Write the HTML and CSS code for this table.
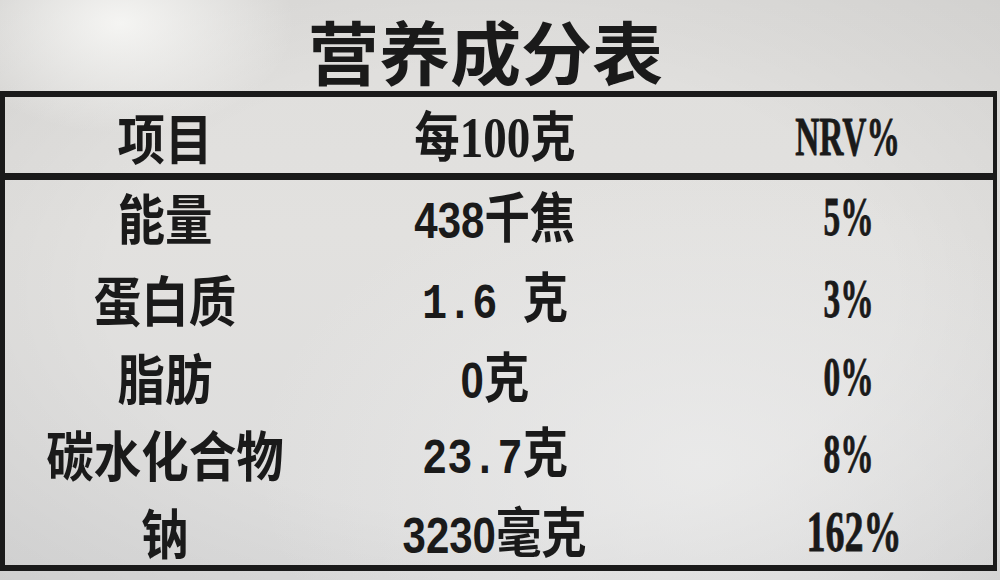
FILE: index.html
```html
<!DOCTYPE html>
<html lang="zh-CN">
<head>
<meta charset="utf-8">
<title>营养成分表</title>
<link rel="stylesheet" href="styles.css">
</head>
<body>
<div class="page">
  <div class="title"><span class="title-text">营养成分表</span></div>
  <div class="table">
    <div class="row head">
      <div class="cell c1"><span class="t">项目</span></div>
      <div class="cell c2"><span class="t">每<span class="serif">100</span>克</span></div>
      <div class="cell c3"><span class="t">NRV%</span></div>
    </div>
    <div class="row">
      <div class="cell c1"><span class="t">能量</span></div>
      <div class="cell c2"><span class="t"><span class="sans">438</span>千焦</span></div>
      <div class="cell c3"><span class="t">5%</span></div>
    </div>
    <div class="row">
      <div class="cell c1"><span class="t">蛋白质</span></div>
      <div class="cell c2"><span class="t"><span class="mono">1.6 </span>克</span></div>
      <div class="cell c3"><span class="t">3%</span></div>
    </div>
    <div class="row">
      <div class="cell c1"><span class="t">脂肪</span></div>
      <div class="cell c2"><span class="t"><span class="sans">0</span>克</span></div>
      <div class="cell c3"><span class="t">0%</span></div>
    </div>
    <div class="row">
      <div class="cell c1"><span class="t">碳水化合物</span></div>
      <div class="cell c2"><span class="t"><span class="mono">23.7</span>克</span></div>
      <div class="cell c3"><span class="t">8%</span></div>
    </div>
    <div class="row">
      <div class="cell c1"><span class="t">钠</span></div>
      <div class="cell c2"><span class="t"><span class="sans">3230</span>毫克</span></div>
      <div class="cell c3"><span class="t wide">162%</span></div>
    </div>
  </div>
</div>
</body>
</html>
```

FILE: styles.css
```css
* { box-sizing: border-box; }

html, body {
  margin: 0;
  padding: 0;
}

body {
  width: 1000px;
  height: 580px;
  overflow: hidden;
  background: #dddcda;
}

.page {
  width: 1000px;
  height: 580px;
  overflow: hidden;
  color: #1a1a1a;
  font-family: "Noto Sans CJK SC", "Noto Sans", sans-serif;
  font-weight: 700;
  background:
    radial-gradient(ellipse at 12% 4%, rgba(250, 250, 248, 0.85) 0%, rgba(250, 250, 248, 0) 14%),
    radial-gradient(ellipse at 70% 80%, rgba(238, 238, 238, 0.7) 0%, rgba(238, 238, 238, 0) 45%),
    radial-gradient(ellipse at 50% 50%, rgba(0, 0, 0, 0) 55%, rgba(0, 0, 0, 0.06) 100%),
    linear-gradient(180deg, #dfdedc 0%, #e2e1df 40%, #dcdcdc 100%);
}

.title {
  height: 91px;
  display: flex;
  justify-content: center;
  align-items: flex-start;
  padding-right: 30px;
}

.title-text {
  font-size: 69px;
  font-weight: 600;
  line-height: normal;
  transform: scaleX(1.03);
}

.table {
  width: 997px;
  border-top: 6px solid #1a1a1a;
  border-left: 5px solid #1a1a1a;
  border-right: 4px solid #1a1a1a;
  border-bottom: 6px solid #1a1a1a;
}

.row {
  display: grid;
  grid-template-columns: 320px 340px 1fr;
  height: 77px;
  align-items: center;
}

.row.head {
  height: 83px;
  border-bottom: 7px solid #1a1a1a;
  padding-top: 3px;
}

.row:nth-child(2) { padding-bottom: 4px; }
.row:nth-child(3) { padding-top: 7px; }
.row:nth-child(4) { padding-top: 9px; }
.row:nth-child(5) { padding-top: 8px; }
.row:nth-child(6) { padding-top: 10px; }

.cell {
  text-align: center;
  line-height: 1;
  white-space: pre;
}

.t {
  display: inline-block;
  transform-origin: center center;
}

.c1 .t {
  font-size: 54px;
  transform: scaleX(0.88);
}

.c2 .t {
  font-size: 54px;
  transform: scaleX(0.84);
}

.c3 {
  padding-left: 38px;
}

.c3 .t {
  font-family: "Liberation Serif", serif;
  font-size: 54px;
  transform: scaleX(0.62);
  -webkit-text-stroke: 0.8px #1a1a1a;
}

.c3 .t.wide {
  font-size: 56px;
  transform: translateX(6px) scaleX(0.68);
}

.sans {
  font-family: "Liberation Sans", sans-serif;
  font-size: 50px;
}

.serif {
  font-family: "Liberation Serif", serif;
  font-size: 56px;
}

.mono {
  font-family: "Liberation Mono", monospace;
  font-size: 50px;
}
```
